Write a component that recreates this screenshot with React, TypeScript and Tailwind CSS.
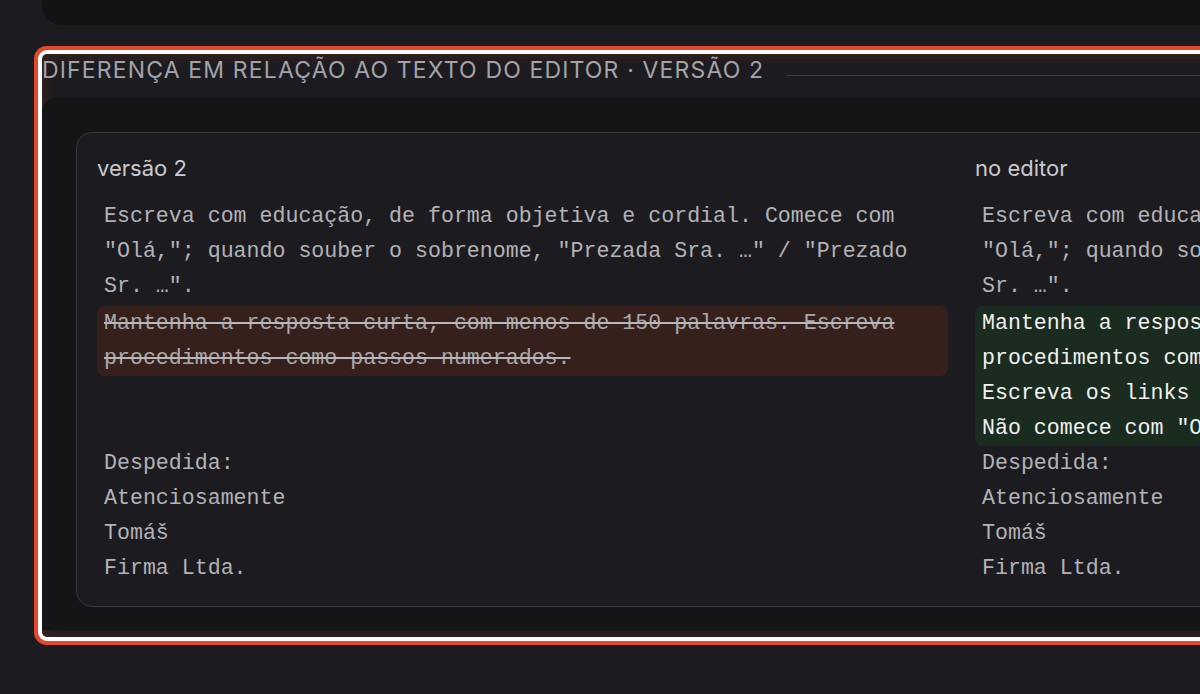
import React from "react";

const mono = { fontFamily: '"Liberation Mono", "DejaVu Sans Mono", monospace' };

const common1 = [
  "Escreva com educação, de forma objetiva e cordial. Comece com",
  "\"Olá,\"; quando souber o sobrenome, \"Prezada Sra. …\" / \"Prezado",
  "Sr. …\".",
];
const tail = ["Despedida:", "Atenciosamente", "Tomáš", "Firma Ltda."];

function Line({ text, className = "" }: { text: string; className?: string }) {
  return (
    <div className={"h-[35px] whitespace-pre px-[7px] leading-[35px] " + className}>{text}</div>
  );
}

function Column({ label, side }: { label: string; side: "old" | "new" }) {
  return (
    <div className="w-[851px] shrink-0">
      <div
        className="h-[24px] text-[22px] leading-[24px] text-[#cacace]"
        style={{ fontFamily: 'Inter, "Noto Sans", sans-serif' }}
      >
        {label}
      </div>
      <div className="mt-[19px] text-[21.6px] text-[#b3b3b7]" style={mono}>
        {common1.map((t) => (
          <Line key={t} text={t} />
        ))}
        {side === "old" ? (
          <>
            <div className="mt-[2px] rounded-[8px] bg-[#36201c] text-[#a9a9ac] line-through decoration-[#b8b8bb]">
              <Line text="Mantenha a resposta curta, com menos de 150 palavras. Escreva" />
              <Line text="procedimentos como passos numerados." />
            </div>
            <Line text="" />
            <Line text="" />
          </>
        ) : (
          <div className="mt-[2px] rounded-[8px] bg-[#1a2b20] text-[#f1f1f1]">
            <Line text="Mantenha a resposta curta, com menos de 120 palavras. Escreva" />
            <Line text="procedimentos como passos numerados." />
            <Line text="Escreva os links por extenso." />
            <Line text={"Não comece com \"Olá\" se souber o nome."} />
          </div>
        )}
        {tail.map((t) => (
          <Line key={t} text={t} />
        ))}
      </div>
    </div>
  );
}

export default function App() {
  return (
    <div className="h-[694px] w-[1200px] overflow-hidden bg-[#1c1c20] pl-[42px]">
      <div className="h-[25px] w-[1300px] rounded-bl-[20px] bg-[#131316]" />
      <section className="mt-[29px] h-[583px] w-[1300px] rounded-[5px] bg-[#1c1c20] shadow-[0_0_0_4px_#ffffff,0_0_0_8px_#e3482d,inset_0_0_14px_rgba(200,60,40,0.28)]">
        <div className="flex h-[44px] items-center gap-[22px] pb-[12px]">
          <div
            className="whitespace-nowrap text-[23px] uppercase leading-[30px] tracking-[0.05em] text-[#a3a3a9]"
            style={{ fontFamily: 'Inter, "Noto Sans", sans-serif' }}
          >
            Diferença em relação ao texto do editor · versão 2
          </div>
          <div className="mt-[10px] h-px flex-1 bg-[#3a3a3f]" />
        </div>
        <div className="h-[532px] rounded-tl-[14px] bg-[#151518] pl-[34px] pt-[34px]">
          <div className="flex h-[475px] w-[1400px] gap-[27px] rounded-[16px] border border-[#38383d] bg-[#1c1c20] pl-[20px] pt-[23px]">
            <Column label="versão 2" side="old" />
            <Column label="no editor" side="new" />
          </div>
        </div>
      </section>
    </div>
  );
}
